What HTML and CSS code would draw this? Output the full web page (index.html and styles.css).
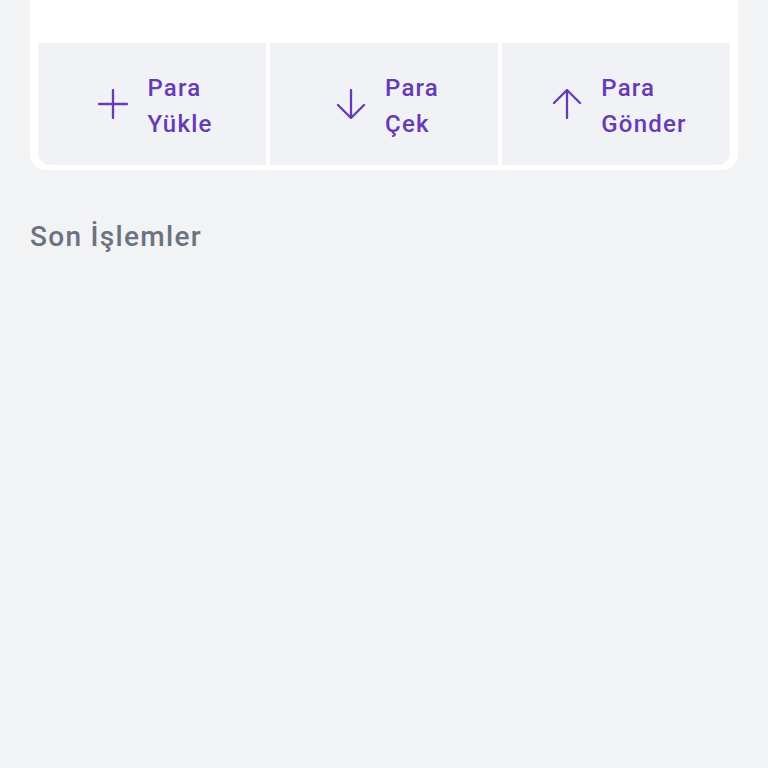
FILE: index.html
```html
<!DOCTYPE html>
<html lang="tr">
<head>
<meta charset="utf-8">
<link rel="stylesheet" href="styles.css">
</head>
<body>
<div class="page">
  <div class="card">
    <div class="actions">
      <button class="action first">
        <svg class="icon" viewBox="0 0 30 30"><path d="M15 1V29M1 15H29"/></svg>
        <span class="label">Para<br>Yükle</span>
      </button>
      <button class="action">
        <svg class="icon" viewBox="0 0 30 30"><path d="M15 1V29M2 16L15 29L28 16"/></svg>
        <span class="label">Para<br>Çek</span>
      </button>
      <button class="action last">
        <svg class="icon" viewBox="0 0 30 30"><path d="M15 29V1M2 14L15 1L28 14"/></svg>
        <span class="label">Para<br>Gönder</span>
      </button>
    </div>
  </div>
  <h2 class="section-title">Son İşlemler</h2>
</div>
</body>
</html>
```
FILE: styles.css
```css
html, body {
  margin: 0;
  padding: 0;
  background: #f2f3f5;
  font-family: Roboto, "Noto Sans", sans-serif;
}
.page {
  padding: 0 30px;
}
.card {
  background: #ffffff;
  border-radius: 0 0 16px 16px;
  padding: 43px 8px 5px 8px;
}
.actions {
  display: grid;
  grid-template-columns: 1fr 1fr 1fr;
  gap: 4px;
}
.action {
  height: 122px;
  border: none;
  background: #f1f2f5;
  display: flex;
  align-items: center;
  justify-content: center;
  gap: 19px;
  padding: 0 0 0 7px;
  margin: 0;
  font-family: inherit;
  color: #673ab7;
}
.action.first { border-bottom-left-radius: 12px; }
.action.last { border-bottom-right-radius: 12px; }
.icon {
  width: 30px;
  height: 30px;
  flex: none;
  fill: none;
  stroke: #673ab7;
  stroke-width: 2.3;
  stroke-linecap: round;
  stroke-linejoin: round;
}
.label {
  text-align: left;
  font-size: 24px;
  font-weight: 500;
  line-height: 36px;
  letter-spacing: 1.2px;
  margin-top: 4px;
}
.section-title {
  margin: 49px 0 0 0;
  font-size: 28px;
  font-weight: 500;
  line-height: 36px;
  letter-spacing: 1.3px;
  color: #6b7280;
}
```
